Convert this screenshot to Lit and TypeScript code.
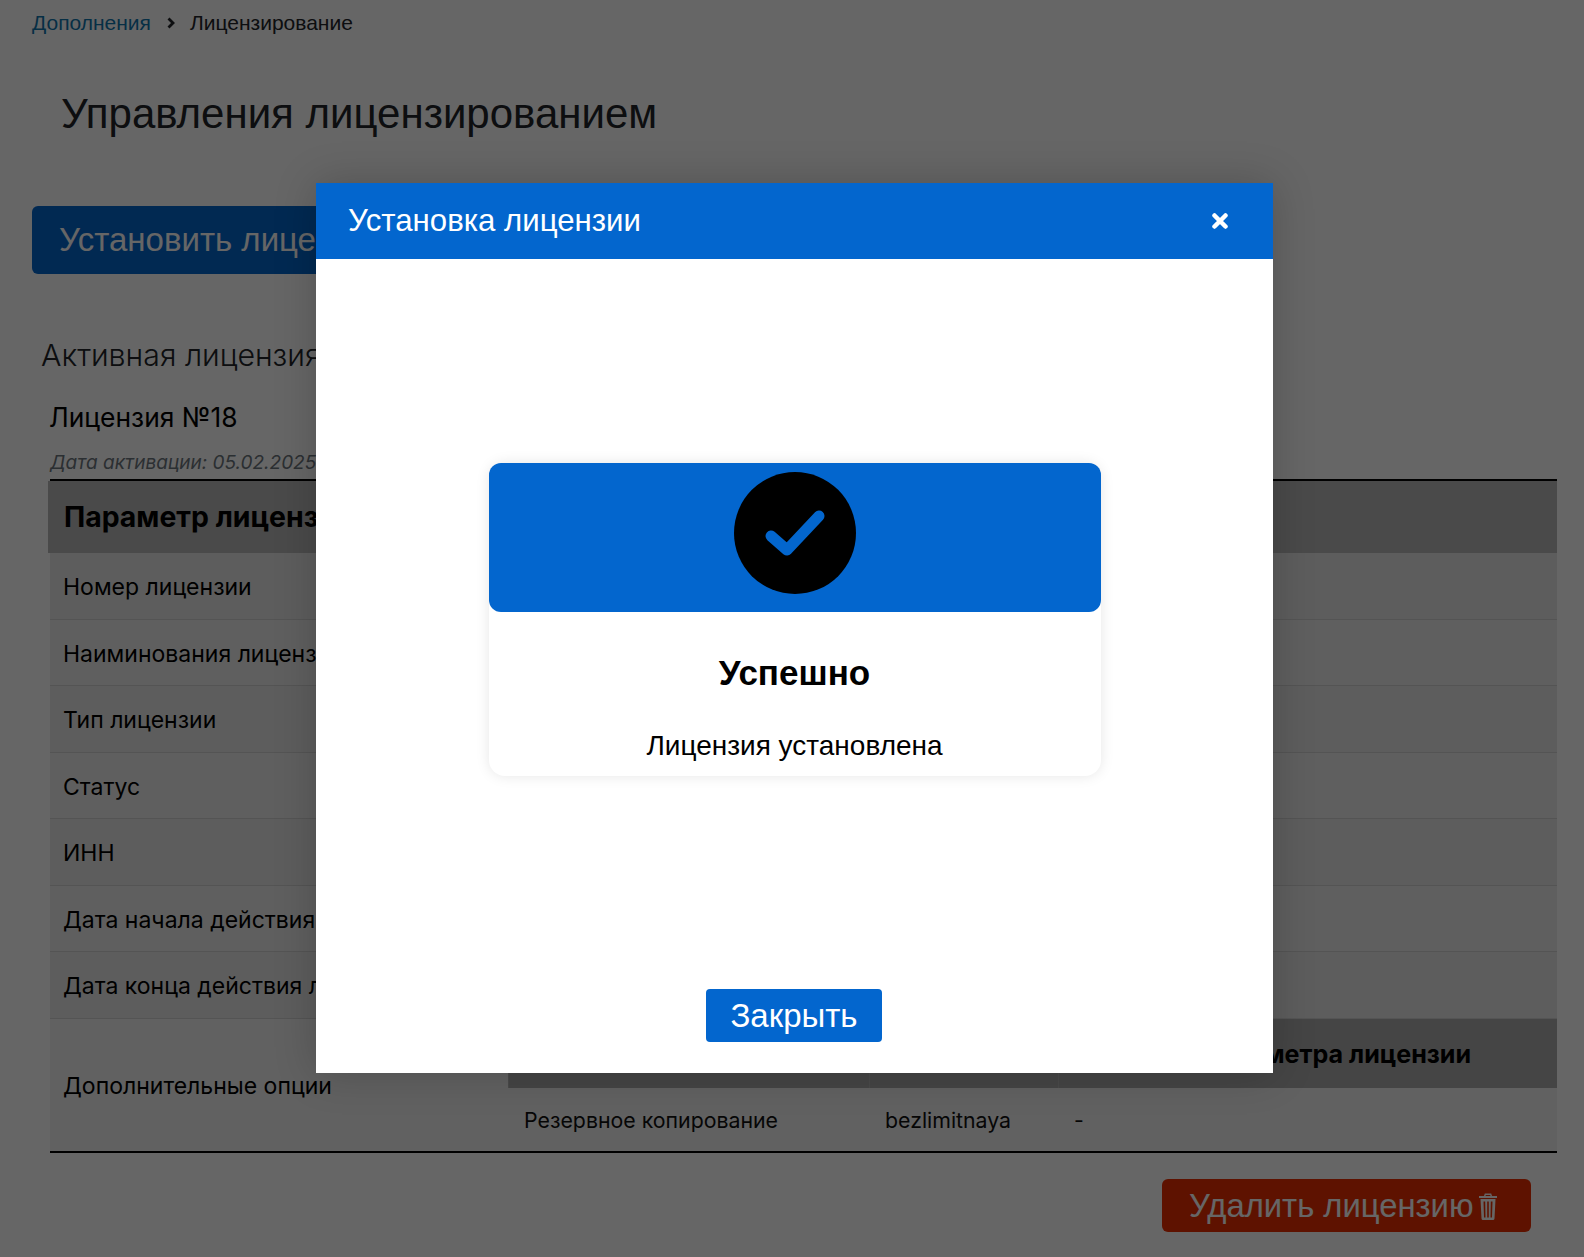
import { LitElement, css, html, svg } from 'lit'
import { customElement } from 'lit/decorators.js'

const ROWS = [
  'Номер лицензии',
  'Наиминования лицензии',
  'Тип лицензии',
  'Статус',
  'ИНН',
  'Дата начала действия лицензии',
  'Дата конца действия лицензии'
]

const trashIcon = svg`<path d="M6 3 L6.800 0.500 H13.200 L14 3 H19 V5 H1 V3 Z M7.800 2 L7.500 3 H12.500 L12.200 2 Z M2.500 6 H17.500 L16.500 25.500 Q16.400 27 15 27 H5 Q3.600 27 3.500 25.500 Z M5.500 8.500 L6 24.500 H7.500 L7.200 8.500 Z M9.200 8.500 V24.500 H10.800 V8.500 Z M12.800 8.500 L12.500 24.500 H14 L14.500 8.500 Z" fill="currentColor" fill-rule="evenodd"/>`

@customElement('app-root')
export class AppRoot extends LitElement {
  static styles = css`
    :host {
      display: block;
      position: relative;
      height: 1257px;
      overflow: hidden;
      background: #fff;
      color: #000;
      font-family: "Liberation Sans", Arial, sans-serif;
    }
    .page {
      display: flex;
      flex-direction: column;
    }
    .crumbs {
      display: flex;
      align-items: center;
      height: 46px;
      padding-left: 32px;
      font-size: 21px;
      color: #212529;
    }
    .crumbs a {
      color: #0f75ad;
    }
    .crumbs svg {
      width: 10px;
      height: 12px;
      margin: 0 14px 0 15px;
    }
    h1 {
      margin: 39px 0 0 61px;
      height: 57px;
      font-size: 42px;
      line-height: 57px;
      font-weight: 400;
      color: #212529;
    }
    .install {
      align-self: flex-start;
      margin: 64px 0 0 32px;
      width: 420px;
      height: 68px;
      padding: 0 0 1px 27px;
      box-sizing: border-box;
      border: 0;
      border-radius: 6px;
      background: #0366ce;
      color: #fff;
      font: 33px "Liberation Sans", Arial, sans-serif;
      text-align: left;
    }
    h2 {
      margin: 61px 0 0 41px;
      height: 40px;
      font: 300 30.300px/40px Inter, sans-serif;
      color: #212529;
    }
    h3 {
      margin: 24px 0 0 49px;
      height: 36px;
      font: 400 26.400px/36px Inter, sans-serif;
    }
    .activated {
      margin: 13px 0 0 50px;
      height: 31px;
      font: italic 400 19px/30px Inter, sans-serif;
      color: #6c757d;
      white-space: nowrap;
    }
    .table {
      margin: 0 27px 0 50px;
      border-top: 2px solid #000;
      border-bottom: 2px solid #000;
    }
    .head {
      margin-left: -2px;
      height: 72px;
      padding-left: 16px;
      background: #b8b8b8;
      font: 700 28.400px/72px Inter, sans-serif;
    }
    .row {
      height: 66.500px;
      box-sizing: border-box;
      padding: 2px 0 0 13px;
      border-bottom: 1px solid #d2d2d2;
      background: #e9e9e9;
      font: 400 23px/65px Inter, sans-serif;
    }
    .row:nth-child(odd) {
      background: #eeeeee;
    }
    .options {
      display: flex;
      background: #f2f2f2;
    }
    .options-label {
      flex: 0 0 458px;
      padding: 3px 0 0 13px;
      box-sizing: border-box;
      font: 400 23px/129px Inter, sans-serif;
    }
    .inner {
      flex: 1;
      display: grid;
      grid-template-columns: 361px 189px 1fr;
      grid-template-rows: 69px 63px;
    }
    .inner-head {
      padding: 1px 0 0 16px;
      box-sizing: border-box;
      background: #adadad;
      border-left: 1px solid #b9b9b9;
      font: 700 25.100px/68px Inter, sans-serif;
      white-space: nowrap;
    }
    .inner-cell {
      padding: 1px 0 0 16px;
      box-sizing: border-box;
      font: 400 21.300px/62px Inter, sans-serif;
      color: #111;
    }
    .delete {
      align-self: flex-end;
      display: flex;
      align-items: center;
      margin: 26px 53px 0 0;
      width: 369px;
      height: 53px;
      padding: 2px 0 0 27px;
      box-sizing: border-box;
      border: 0;
      border-radius: 6px;
      background: #ec2f00;
      color: #fff;
      font: 32.800px "Liberation Sans", Arial, sans-serif;
    }
    .delete svg {
      width: 20px;
      height: 27px;
      margin-left: 4px;
    }
    .overlay {
      position: absolute;
      inset: 0;
      background: rgba(0, 0, 0, 0.6);
    }
    .modal {
      display: flex;
      flex-direction: column;
      width: 957px;
      height: 890px;
      margin: 183px 0 0 316px;
      background: #fff;
      box-shadow: 0 0 40px rgba(0, 0, 0, 0.2);
    }
    .modal-head {
      display: flex;
      align-items: center;
      justify-content: space-between;
      flex: none;
      height: 76px;
      padding: 0 45px 0 32px;
      background: #0366ce;
      color: #fff;
      font-size: 31.200px;
    }
    .modal-head svg {
      width: 16px;
      height: 16px;
    }
    .modal-body {
      flex: 1;
      display: flex;
      flex-direction: column;
      align-items: center;
    }
    .card {
      width: 612px;
      height: 313px;
      margin-top: 204px;
      border-radius: 16px;
      box-shadow: 0 0 14px rgba(0, 0, 0, 0.1);
      text-align: center;
    }
    .card-top {
      display: flex;
      justify-content: center;
      height: 148.500px;
      padding-top: 9px;
      box-sizing: border-box;
      border-radius: 12px;
      background: #0366ce;
    }
    .circle {
      display: flex;
      align-items: center;
      justify-content: center;
      width: 122px;
      height: 122px;
      border-radius: 50%;
      background: #000;
    }
    .circle svg {
      width: 60px;
      height: 46px;
    }
    .card-title {
      margin-top: 40px;
      font-size: 35px;
      line-height: 42px;
      font-weight: 700;
    }
    .card-text {
      margin-top: 36.500px;
      font-size: 28px;
      line-height: 32px;
    }
    .close {
      width: 176px;
      height: 53px;
      margin: 213px 1px 0 0;
      border: 0;
      border-radius: 4px;
      background: #0366ce;
      color: #fff;
      font: 33px "Liberation Sans", Arial, sans-serif;
    }
  `

  render () {
    return html`
      <div class="page">
        <div class="crumbs">
          <a>Дополнения</a>
          <svg viewBox="0 0 10 12"><path d="M2.500 1.500 L7 6 L2.500 10.500" fill="none" stroke="#212529" stroke-width="2.800"/></svg>
          <span>Лицензирование</span>
        </div>
        <h1>Управления лицензированием</h1>
        <button class="install">Установить лицензию</button>
        <h2>Активная лицензия</h2>
        <h3>Лицензия №18</h3>
        <div class="activated">Дата активации: 05.02.2025</div>
        <div class="table">
          <div class="head">Параметр лицензии</div>
          ${ROWS.map((row) => html`<div class="row">${row}</div>`)}
          <div class="options">
            <div class="options-label">Дополнительные опции</div>
            <div class="inner">
              <div class="inner-head"></div>
              <div class="inner-head"></div>
              <div class="inner-head">Значение параметра лицензии</div>
              <div class="inner-cell">Резервное копирование</div>
              <div class="inner-cell">bezlimitnaya</div>
              <div class="inner-cell">-</div>
            </div>
          </div>
        </div>
        <button class="delete">Удалить лицензию<svg viewBox="0 0 20 27">${trashIcon}</svg></button>
      </div>
      <div class="overlay">
        <div class="modal">
          <div class="modal-head">
            <span>Установка лицензии</span>
            <svg viewBox="0 0 16 16"><path d="M2.500 2.500 L13.500 13.500 M13.500 2.500 L2.500 13.500" stroke="#fff" stroke-width="4.500" stroke-linecap="round"/></svg>
          </div>
          <div class="modal-body">
            <div class="card">
              <div class="card-top">
                <div class="circle">
                  <svg viewBox="0 0 60 46"><path d="M6 26 L22 40 L54 6" fill="none" stroke="#0366ce" stroke-width="11" stroke-linecap="round" stroke-linejoin="round"/></svg>
                </div>
              </div>
              <div class="card-title">Успешно</div>
              <div class="card-text">Лицензия установлена</div>
            </div>
            <button class="close">Закрыть</button>
          </div>
        </div>
      </div>
    `
  }
}
